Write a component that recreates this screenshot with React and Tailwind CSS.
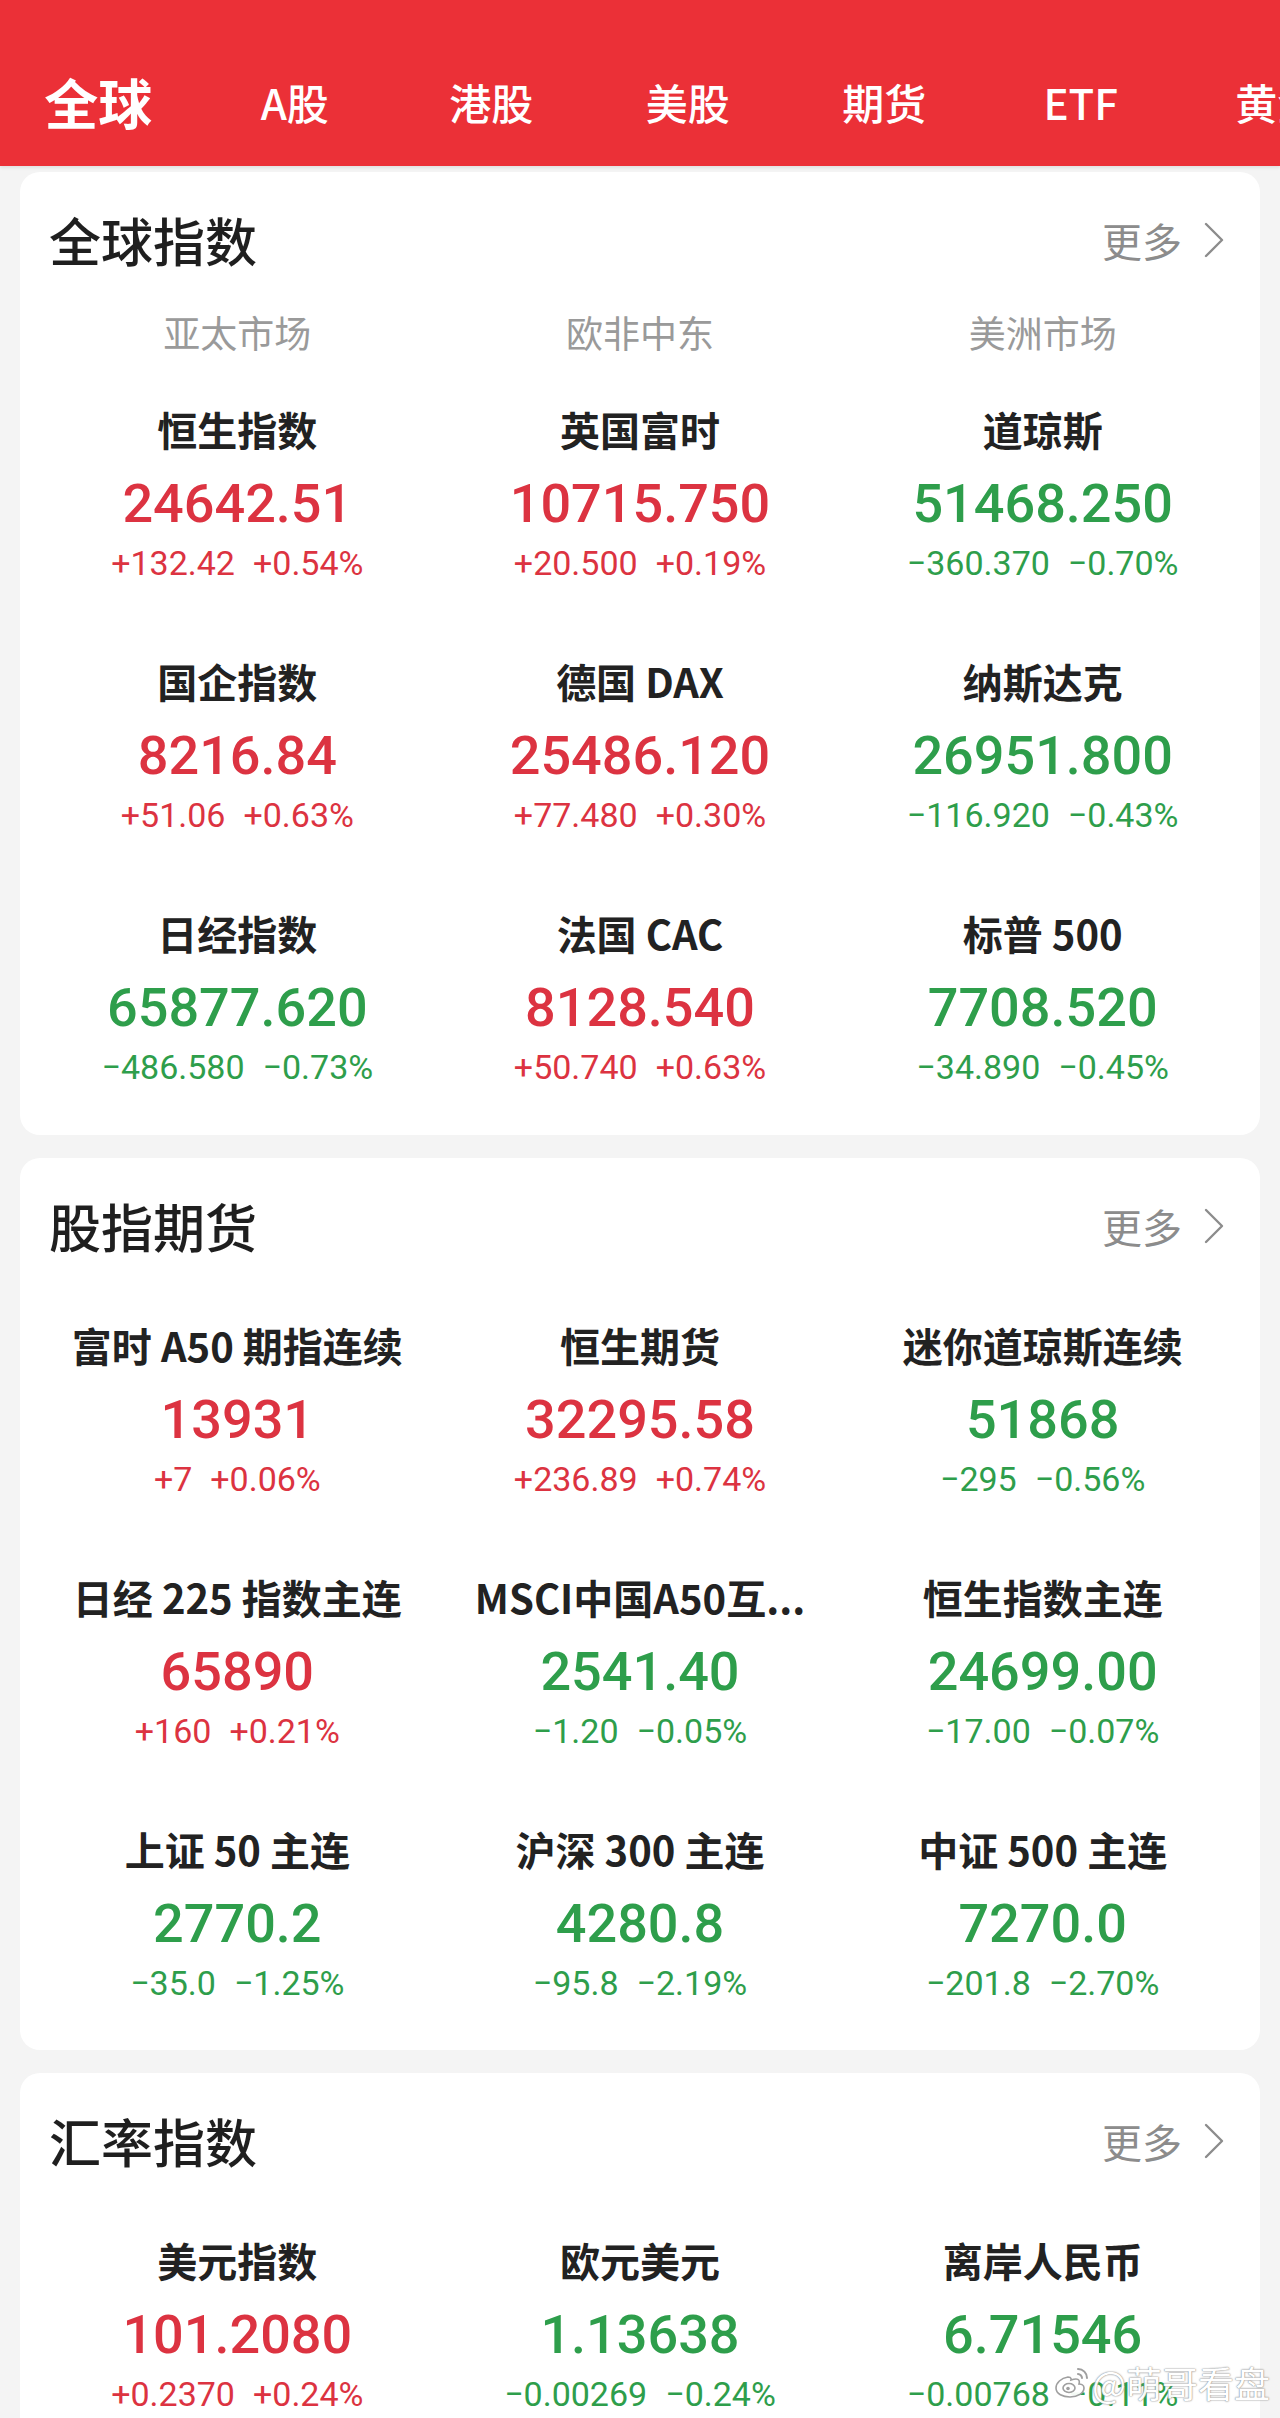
import React from 'react';

const tabs = ['全球', 'A股', '港股', '美股', '期货', 'ETF', '黄金'];

const globalIndex = [
  { name: '恒生指数', value: '24642.51', chg: '+132.42', pct: '+0.54%', up: true },
  { name: '英国富时', value: '10715.750', chg: '+20.500', pct: '+0.19%', up: true },
  { name: '道琼斯', value: '51468.250', chg: '-360.370', pct: '-0.70%', up: false },
  { name: '国企指数', value: '8216.84', chg: '+51.06', pct: '+0.63%', up: true },
  { name: '德国 DAX', value: '25486.120', chg: '+77.480', pct: '+0.30%', up: true },
  { name: '纳斯达克', value: '26951.800', chg: '-116.920', pct: '-0.43%', up: false },
  { name: '日经指数', value: '65877.620', chg: '-486.580', pct: '-0.73%', up: false },
  { name: '法国 CAC', value: '8128.540', chg: '+50.740', pct: '+0.63%', up: true },
  { name: '标普 500', value: '7708.520', chg: '-34.890', pct: '-0.45%', up: false },
];

const futures = [
  { name: '富时 A50 期指连续', value: '13931', chg: '+7', pct: '+0.06%', up: true },
  { name: '恒生期货', value: '32295.58', chg: '+236.89', pct: '+0.74%', up: true },
  { name: '迷你道琼斯连续', value: '51868', chg: '-295', pct: '-0.56%', up: false },
  { name: '日经 225 指数主连', value: '65890', chg: '+160', pct: '+0.21%', up: true },
  { name: 'MSCI中国A50互...', value: '2541.40', chg: '-1.20', pct: '-0.05%', up: false },
  { name: '恒生指数主连', value: '24699.00', chg: '-17.00', pct: '-0.07%', up: false },
  { name: '上证 50 主连', value: '2770.2', chg: '-35.0', pct: '-1.25%', up: false },
  { name: '沪深 300 主连', value: '4280.8', chg: '-95.8', pct: '-2.19%', up: false },
  { name: '中证 500 主连', value: '7270.0', chg: '-201.8', pct: '-2.70%', up: false },
];

const fx = [
  { name: '美元指数', value: '101.2080', chg: '+0.2370', pct: '+0.24%', up: true },
  { name: '欧元美元', value: '1.13638', chg: '-0.00269', pct: '-0.24%', up: false },
  { name: '离岸人民币', value: '6.71546', chg: '-0.00768', pct: '-0.11%', up: false },
];

const cjk = "font-['Noto_Sans_CJK_SC','Noto_Sans',sans-serif]";
const num = "font-['Roboto','Noto_Sans_CJK_SC',sans-serif]";

function SectionHead({ title }) {
  return (
    <div className="pt-[36px] h-[100px] pl-[29px] pr-[36px] flex items-center justify-between">
      <span className={`${cjk} text-[52px] leading-[64px] font-medium text-[#1f1f1f]`}>{title}</span>
      <span className="flex items-center gap-[22px]">
        <span className={`${cjk} text-[40px] leading-[50px] text-[#8c8c8c]`}>更多</span>
        <svg width="20" height="36" viewBox="0 0 20 36" fill="none">
          <polyline points="2,2 18,18 2,34" stroke="#8c8c8c" strokeWidth="2.4" strokeLinejoin="round" strokeLinecap="round" />
        </svg>
      </span>
    </div>
  );
}

function Quote({ q }) {
  const color = q.up ? 'text-[#dc3341]' : 'text-[#2e9e4b]';
  return (
    <div className="flex flex-col items-center">
      <div className={`${cjk} h-[48px] leading-[48px] text-[40px] font-bold text-[#222222] whitespace-nowrap`}>{q.name}</div>
      <div className={`${num} ${color} mt-[15px] h-[72px] leading-[72px] text-[54px] font-medium`}>{q.value}</div>
      <div className={`${num} ${color} mt-[1px] h-[44px] leading-[44px] text-[34px] flex gap-[18px]`}>
        <span>{q.chg.replace('-', '−')}</span>
        <span>{q.pct.replace('-', '−')}</span>
      </div>
    </div>
  );
}

function QuoteGrid({ items }) {
  return (
    <div className="grid grid-cols-3 gap-y-[72px] px-[16px]">
      {items.map((q) => (
        <Quote key={q.name} q={q} />
      ))}
    </div>
  );
}

function WeiboMark() {
  return (
    <div className="absolute left-[1054px] top-[2362px] flex items-center gap-[2px] opacity-95">
      <svg width="36" height="34" viewBox="0 0 36 34" fill="none">
        <path d="M14 12c-7 1-12 6-12 11 0 6 7 9 14 9 8 0 14-4 14-9 0-3-3-4-5-4 1-3 0-5-3-5-2 0-5 1-5 1s1-3-3-3z" fill="#ffffff" stroke="#9a9a9a" strokeWidth="1.6" />
        <ellipse cx="15" cy="23" rx="6" ry="4.5" fill="#ffffff" stroke="#9a9a9a" strokeWidth="1.6" />
        <circle cx="14" cy="23.5" r="1.8" fill="#9a9a9a" />
        <path d="M24 4c5 0 9 4 9 9" stroke="#9a9a9a" strokeWidth="2" strokeLinecap="round" />
        <path d="M24 9c2 0 4 2 4 4" stroke="#9a9a9a" strokeWidth="2" strokeLinecap="round" />
      </svg>
      <span className={`${cjk} text-[36px] leading-[40px] text-white [text-shadow:0_0_1px_#777,0_0_2px_#999]`}>@萌哥看盘</span>
    </div>
  );
}

export default function App() {
  return (
    <div className="relative w-[1280px] h-[2418px] overflow-hidden bg-[#f4f4f4]">
      <div className="h-[166px] bg-[#eb3037] pt-[36px] flex items-center overflow-hidden shadow-[0_2px_3px_rgba(0,0,0,0.08)]">
        {tabs.map((t, i) => (
          <div
            key={t}
            className={`${cjk} w-[196.5px] shrink-0 text-center text-white whitespace-nowrap ${
              i === 0 ? 'text-[54px] font-bold' : 'text-[42px] font-medium'
            }`}
          >
            {t}
          </div>
        ))}
      </div>

      <div className="px-[20px] pt-[6px] flex flex-col gap-[23px]">
        <div className="bg-white rounded-[20px] pb-[46px]">
          <SectionHead title="全球指数" />
          <div className="grid grid-cols-3 px-[16px] mt-[35px]">
            {['亚太市场', '欧非中东', '美洲市场'].map((s) => (
              <div key={s} className={`${cjk} h-[50px] leading-[50px] text-center text-[37px] text-[#9a9a9a]`}>
                {s}
              </div>
            ))}
          </div>
          <div className="mt-[48px]">
            <QuoteGrid items={globalIndex} />
          </div>
        </div>

        <div className="bg-white rounded-[20px] pb-[45px]">
          <SectionHead title="股指期货" />
          <div className="mt-[63px]">
            <QuoteGrid items={futures} />
          </div>
        </div>

        <div className="bg-white rounded-[20px] pb-[45px]">
          <SectionHead title="汇率指数" />
          <div className="mt-[63px]">
            <QuoteGrid items={fx} />
          </div>
        </div>
      </div>

      <WeiboMark />
    </div>
  );
}
